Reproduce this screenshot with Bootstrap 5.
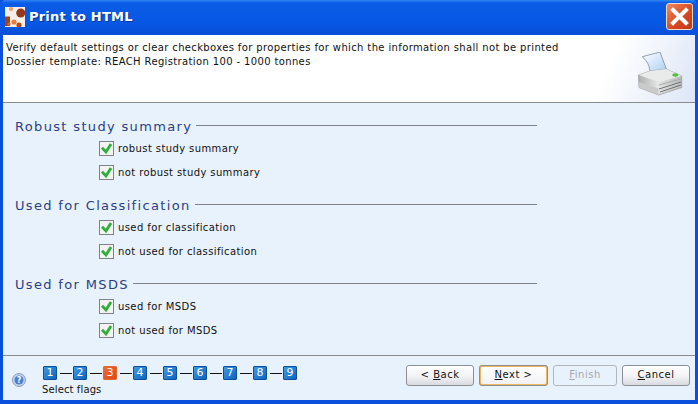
<!doctype html>
<html lang="en"><head><meta charset="utf-8"><title>Print to HTML</title>
<link rel="stylesheet" href="https://cdn.jsdelivr.net/npm/bootstrap@5.3.0/dist/css/bootstrap.min.css">
<style>
html,body{margin:0;height:404px;width:698px;overflow:hidden}
body{font-family:"DejaVu Sans",sans-serif;font-size:10px;color:#111;background:#0a4fd8}
.win{width:698px;height:404px;border:solid #0b50dc;border-width:0 3px 4px 3px;border-radius:6px 6px 0 0;background:#e8f2fd}
.tbar{height:35px;flex:none;margin:0 -3px;padding:0 5px 2px 5px;background:linear-gradient(#2f86f2 0,#0a5ce6 3px,#0657e4 24px,#0a4fd8 35px);border-radius:6px 6px 0 0}
.ttl{font-size:13px;font-weight:700;color:#fff;text-shadow:1px 1px 0 #03359f;letter-spacing:.2px}
.cls{width:27px;height:27px;border:1px solid #f4d9cc;border-radius:3px;background:linear-gradient(135deg,#ee8a62,#d6461f 60%,#c23a16)}
.hdr{height:68px;flex:none;padding:6px 3px 0 3px;background:linear-gradient(112deg,#fff 86%,#dde6f6 100%);border-bottom:1px solid #8b8b8b;line-height:14px;letter-spacing:.365px;position:relative}
.prn{position:absolute;right:12px;top:17px}
.body{flex:none;height:252px;padding-top:15px}
.sect{height:79px}
.stitle{height:18px;padding-left:12px;width:534px}
.stxt{font-size:13px;color:#2b3f85;letter-spacing:1.34px;line-height:18px;white-space:nowrap}
.srule{flex:1;height:1px;background:#80838a;margin-left:4px;margin-top:-3px}
.chk{height:24.5px;padding-left:96px;letter-spacing:.4px}
.cbx{width:15px;height:15px;border:1px solid #7f8286;background:#f2f3f2;margin-right:4px}
.ftr{flex:1;border-top:1px solid #8b8b8b;padding:0 5px 0 9px}
.help{width:14px;height:14px;margin-right:17px;margin-top:4px}
.stepn{width:14px;height:14px;border:1px solid #0c4f9f;border-radius:1px;background:linear-gradient(135deg,#3f9be6,#0e63bd);color:#fff;font-size:11px;line-height:12px;text-align:center}
.stepn.act{background:linear-gradient(135deg,#f46a2c,#e2451a);border-color:#d96a35}
.dash{width:12px;height:1px;background:#111;margin:0 1.5px 0 2.5px}
.stepw{margin-top:6px}
.stepl{margin-top:4px;margin-left:-1px;letter-spacing:.12px;line-height:12px}
.btnrow{margin-bottom:6px}
.wbtn{width:68px;height:21px;padding:0;font-size:10px;line-height:18px;color:#111;letter-spacing:.5px;border:1px solid #8b9097;border-radius:3px;background:linear-gradient(#fff 0,#f3f3f6 55%,#d8dae0 100%);margin-left:5px;font-family:inherit;box-shadow:none}
.wbtn.dft{width:69px;border:2px solid #f0b75a;outline:1px solid #8b9097;outline-offset:-1px;line-height:16px;background:linear-gradient(#fff,#f2f2f5)}
.wbtn.off{width:64px;color:#a5a8ad;border-color:#b4b6ba;background:#e8f2fd;opacity:1}
.wbtn u{text-underline-offset:1px}
</style></head><body>
<div class="win d-flex flex-column">
<div class="tbar d-flex align-items-center justify-content-between">
 <div class="d-flex align-items-center gap-1">
  <svg width="20" height="20" viewBox="0 0 20 20"><rect width="20" height="20" fill="#f6efe9"/><rect y="9.5" width="5" height="9.5" fill="#a8400f"/><circle cx="15.7" cy="6" r="4.5" fill="#93381a"/><circle cx="9" cy="15" r="2.6" fill="#e8803c"/><circle cx="14" cy="18" r="2.6" fill="#b9481a"/><circle cx="6" cy="2" r="2" fill="#eb9a72"/><circle cx="4" cy="17" r="1.6" fill="#e0601c"/></svg>
  <span class="ttl">Print to HTML</span>
 </div>
 <div class="cls d-flex align-items-center justify-content-center">
  <svg width="19" height="19" viewBox="0 0 19 19"><path d="M3 3L16 16M16 3L3 16" stroke="#fff" stroke-width="4" stroke-linecap="square"/></svg>
 </div>
</div>
<div class="hdr">
 <div>Verify default settings or clear checkboxes for properties for which the information shall not be printed</div>
 <div>Dossier template: REACH Registration 100 - 1000 tonnes</div>
 <svg class="prn" width="45" height="44" viewBox="0 0 45 44">
  <defs><linearGradient id="pg" x1="0" y1="0" x2="1" y2="1"><stop offset="0" stop-color="#fff"/><stop offset="1" stop-color="#a9cdf4"/></linearGradient>
  <linearGradient id="bg" x1="0" y1="0" x2="1" y2="0"><stop offset="0" stop-color="#aeb0b0"/><stop offset=".45" stop-color="#e4e5e5"/><stop offset="1" stop-color="#b9bbbb"/></linearGradient></defs>
  <path d="M4.3 4.7L22 0L28.7 18L12 21C12 14 9 9 4.3 4.7Z" fill="url(#pg)" stroke="#7f8c99" stroke-width=".8"/>
  <path d="M.5 23L12 19L28 17L43.7 24V35.5L20.5 43L1 35.5Z" fill="url(#bg)" stroke="#9a9c9e" stroke-width=".8"/>
  <path d="M.5 23L21 30L43.7 24L28 17L12 19Z" fill="#e9eaea"/>
  <path d="M1 30L20.5 36.5V43L1 35.5Z" fill="#c9cbcb"/>
  <path d="M21 33L43 27" stroke="#a8aaaa" stroke-width="1"/>
  <path d="M21 37L43 30M22 40L43 33" stroke="#6f7173" stroke-width="1"/>
  <ellipse cx="37.3" cy="23" rx="3" ry="1.7" fill="#4fc23a"/>
 </svg>
</div>
<div class="body">
 <div class="sect">
  <div class="stitle d-flex align-items-center"><span class="stxt">Robust study summary</span><span class="srule"></span></div>
  <div class="chk d-flex align-items-center"><span class="cbx d-flex"><svg width="13" height="13" viewBox="0 0 13 13"><path d="M2 5.7L6 10L11 2" fill="none" stroke="#2fae3a" stroke-width="2.8"/></svg></span>robust study summary</div>
  <div class="chk d-flex align-items-center"><span class="cbx d-flex"><svg width="13" height="13" viewBox="0 0 13 13"><path d="M2 5.7L6 10L11 2" fill="none" stroke="#2fae3a" stroke-width="2.8"/></svg></span>not robust study summary</div>
 </div>
 <div class="sect">
  <div class="stitle d-flex align-items-center"><span class="stxt">Used for Classification</span><span class="srule"></span></div>
  <div class="chk d-flex align-items-center"><span class="cbx d-flex"><svg width="13" height="13" viewBox="0 0 13 13"><path d="M2 5.7L6 10L11 2" fill="none" stroke="#2fae3a" stroke-width="2.8"/></svg></span>used for classification</div>
  <div class="chk d-flex align-items-center"><span class="cbx d-flex"><svg width="13" height="13" viewBox="0 0 13 13"><path d="M2 5.7L6 10L11 2" fill="none" stroke="#2fae3a" stroke-width="2.8"/></svg></span>not used for classification</div>
 </div>
 <div class="sect">
  <div class="stitle d-flex align-items-center"><span class="stxt">Used for MSDS</span><span class="srule"></span></div>
  <div class="chk d-flex align-items-center"><span class="cbx d-flex"><svg width="13" height="13" viewBox="0 0 13 13"><path d="M2 5.7L6 10L11 2" fill="none" stroke="#2fae3a" stroke-width="2.8"/></svg></span>used for MSDS</div>
  <div class="chk d-flex align-items-center"><span class="cbx d-flex"><svg width="13" height="13" viewBox="0 0 13 13"><path d="M2 5.7L6 10L11 2" fill="none" stroke="#2fae3a" stroke-width="2.8"/></svg></span>not used for MSDS</div>
 </div>
</div>
<div class="ftr d-flex align-items-center">
 <svg class="help" viewBox="0 0 14 14"><circle cx="7" cy="7" r="6.5" fill="#c4d6ee" stroke="#8a9cb8"/><circle cx="7" cy="7" r="4.5" fill="#4a7fd0"/><text x="7" y="10" font-size="8" font-weight="700" fill="#fff" text-anchor="middle" font-family="DejaVu Sans">?</text></svg>
 <div class="flex-grow-1 stepw">
  <div class="d-flex align-items-center">
   <span class="stepn">1</span><span class="dash"></span><span class="stepn">2</span><span class="dash"></span><span class="stepn act">3</span><span class="dash"></span><span class="stepn">4</span><span class="dash"></span><span class="stepn">5</span><span class="dash"></span><span class="stepn">6</span><span class="dash"></span><span class="stepn">7</span><span class="dash"></span><span class="stepn">8</span><span class="dash"></span><span class="stepn">9</span>
  </div>
  <div class="stepl">Select flags</div>
 </div>
 <div class="d-flex btnrow">
  <button class="btn wbtn">&lt; <u>B</u>ack</button>
  <button class="btn wbtn dft"><u>N</u>ext &gt;</button>
  <button class="btn wbtn off" disabled><u>F</u>inish</button>
  <button class="btn wbtn"><u>C</u>ancel</button>
 </div>
</div>
</div>
</body></html>
